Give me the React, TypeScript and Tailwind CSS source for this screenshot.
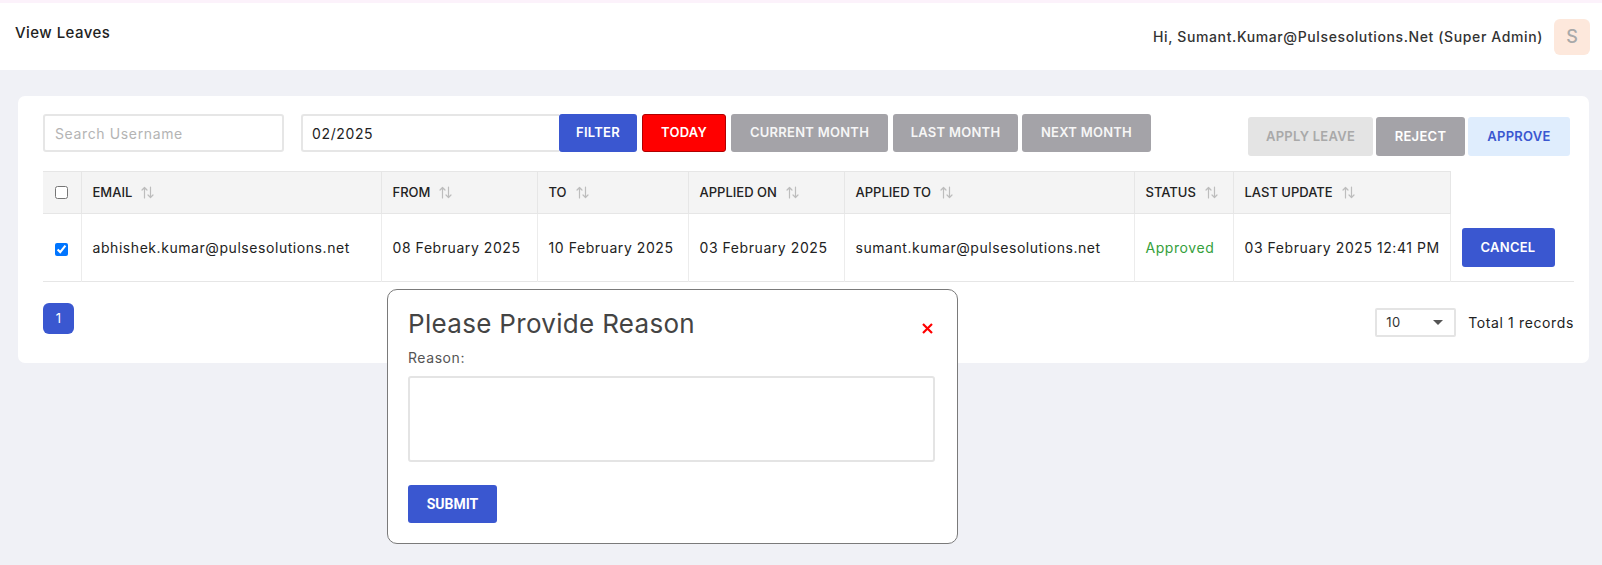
import React from "react";

const SortIcon = () => (
  <svg width="13" height="13" viewBox="0 0 13 13" fill="none" stroke="#bdbdbd" strokeWidth="1.2" strokeLinecap="round" strokeLinejoin="round" className="ml-[9px] shrink-0">
    <path d="M3.5 12V1.5M1 4L3.5 1.5L6 4" />
    <path d="M9.5 1V11.5M7 9L9.5 11.5L12 9" />
  </svg>
);

const cols = [
  { label: "EMAIL", w: "w-[300px]" },
  { label: "FROM", w: "w-[156px]" },
  { label: "TO", w: "w-[151px]" },
  { label: "APPLIED ON", w: "w-[156px]" },
  { label: "APPLIED TO", w: "w-[290px]" },
  { label: "STATUS", w: "w-[99px]" },
  { label: "LAST UPDATE", w: "w-[217px]" },
];

const cell = "whitespace-nowrap border-x border-[#ececec] px-[11px] tracking-[0.04em]";

export default function App() {
  return (
    <div
      className="relative min-h-[565px] bg-[#f0f1f6] text-[#222]"
      style={{ fontFamily: 'Inter, "Open Sans", sans-serif' }}
    >
      <div className="h-[3px] bg-[#fcf2fb]" />
      <header className="flex h-[67px] items-center justify-between bg-white pl-[15px] pr-[12px]">
        <div className="-mt-[7px] text-[15px] font-medium tracking-[0.03em] text-[#222]">View Leaves</div>
        <div className="flex items-center gap-[11px]">
          <span className="text-[14px] font-medium tracking-[0.044em] text-[#333]">Hi, Sumant.Kumar@Pulsesolutions.Net (Super Admin)</span>
          <div className="flex h-[36px] w-[36px] items-center justify-center rounded-[6px] bg-[#fde8dc] text-[18px] font-medium text-[#a9a9a9]">S</div>
        </div>
      </header>

      <div className="ml-[18px] mr-[13px] mt-[26px] rounded-[7px] bg-white pb-[26px] pl-[25px] pr-[15px] pt-[18px]">
        <div className="flex items-start">
          <input
            placeholder="Search Username"
            className="h-[38px] w-[241px] rounded-[3px] border-2 border-[#e6e6e6] px-[10px] text-[14px] tracking-[0.045em] text-[#222] outline-none placeholder:text-[#b4b4b4]"
          />
          <input
            defaultValue="02/2025"
            className="ml-[17px] h-[38px] w-[258px] rounded-l-[3px] border-2 border-r-0 border-[#e6e6e6] px-[9px] text-[14px] tracking-[0.045em] text-[#222] outline-none"
          />
          <button className="h-[38px] w-[78px] rounded-[3px] bg-[#3a57d0] text-[13px] font-semibold tracking-[0.02em] text-white">FILTER</button>
          <button className="ml-[5px] h-[38px] w-[84px] rounded-[3px] border border-[#b00000] bg-[#ff0000] text-[13px] font-semibold tracking-[0.02em] text-white">TODAY</button>
          <button className="ml-[5px] h-[38px] w-[157px] rounded-[3px] bg-[#a4a3a8] text-[13px] font-semibold tracking-[0.02em] text-[#f6f6f6]">CURRENT MONTH</button>
          <button className="ml-[5px] h-[38px] w-[125px] rounded-[3px] bg-[#a4a3a8] text-[13px] font-semibold tracking-[0.02em] text-[#f6f6f6]">LAST MONTH</button>
          <button className="ml-[4px] h-[38px] w-[129px] rounded-[3px] bg-[#a4a3a8] text-[13px] font-semibold tracking-[0.02em] text-[#f6f6f6]">NEXT MONTH</button>
          <div className="flex-1" />
          <div className="mr-[4px] mt-[3px] flex gap-[3px]">
            <button className="h-[39px] w-[125px] rounded-[3px] bg-[#e4e4e4] text-[13px] font-semibold tracking-[0.02em] text-[#a9a9a9]">APPLY LEAVE</button>
            <button className="h-[39px] w-[89px] rounded-[3px] bg-[#a4a3a8] text-[13px] font-semibold tracking-[0.02em] text-white">REJECT</button>
            <button className="h-[39px] w-[102px] rounded-[3px] bg-[#dfedfd] text-[13px] font-semibold tracking-[0.02em] text-[#3a57d0]">APPROVE</button>
          </div>
        </div>

        <table className="mt-[15px] w-full table-fixed border-collapse">
          <thead>
            <tr className="h-[42px]">
              <th className="w-[38px] border-y border-[#e6e6e6] bg-[#f4f4f4] p-0 text-center align-middle">
                <input type="checkbox" className="mt-[6px] h-[13px] w-[13px]" readOnly />
              </th>
              {cols.map((c) => (
                <th
                  key={c.label}
                  className={`${c.w} border border-[#e6e6e6] bg-[#f4f4f4] px-[11px] text-left align-middle text-[13px] font-medium text-[#222]`}
                >
                  <div className="flex items-center whitespace-nowrap">
                    <span>{c.label}</span>
                    <SortIcon />
                  </div>
                </th>
              ))}
              <th className="border-l border-[#e6e6e6] bg-white p-0" />
            </tr>
          </thead>
          <tbody>
            <tr className="h-[68px] border-b border-[#e6e6e6] text-[14px] text-[#222]">
              <td className="p-0 text-center align-middle">
                <input type="checkbox" defaultChecked className="h-[13px] w-[13px] align-middle" readOnly />
              </td>
              <td className={cell}>abhishek.kumar@pulsesolutions.net</td>
              <td className={cell}>08 February 2025</td>
              <td className={cell}>10 February 2025</td>
              <td className={cell}>03 February 2025</td>
              <td className={cell}>sumant.kumar@pulsesolutions.net</td>
              <td className={`${cell} text-[#35a03c]`}>Approved</td>
              <td className={cell}>03 February 2025 12:41 PM</td>
              <td className="px-[11px]">
                <button className="h-[39px] w-[93px] rounded-[3px] bg-[#3a57d0] text-[13px] font-semibold tracking-[0.02em] text-white">CANCEL</button>
              </td>
            </tr>
          </tbody>
        </table>

        <div className="mt-[21px] flex items-start justify-between">
          <div className="flex h-[31px] w-[31px] items-center justify-center rounded-[6px] bg-[#3a57d0] text-[13px] text-white">1</div>
          <div className="mt-[5px] flex items-center">
            <div className="flex h-[29px] w-[81px] items-center justify-between rounded-[2px] border-2 border-[#e4e4e4] pl-[9px] pr-[11px] text-[13px] tracking-[0.04em] text-[#333]">
              <span>10</span>
              <svg width="10" height="6" viewBox="0 0 10 6">
                <path d="M0 0H10L5 5Z" fill="#555" />
              </svg>
            </div>
            <span className="ml-[12px] text-[14px] tracking-[0.045em] text-[#222]">Total 1 records</span>
          </div>
        </div>
      </div>

      <div className="absolute left-[387px] top-[289px] h-[255px] w-[571px] rounded-[10px] border border-[#7a7a7a] bg-white pl-[20px] pr-[22px] pt-[18px]">
        <div className="flex items-center justify-between">
          <h3 className="text-[26px] font-normal leading-[32px] tracking-[0.012em] text-[#444]">Please Provide Reason</h3>
          <svg width="11" height="11" viewBox="0 0 11 11" className="mr-[2px] mt-[8px]">
            <path d="M1 1L10 10M10 1L1 10" stroke="#ff0000" strokeWidth="2.2" />
          </svg>
        </div>
        <div className="mt-[7px] text-[14px] tracking-[0.04em] text-[#555]">Reason:</div>
        <textarea className="mt-[8px] block h-[86px] w-[527px] resize-none rounded-[3px] border-2 border-[#e4e4e4] outline-none" />
        <button
          className="mt-[23px] h-[38px] w-[89px] rounded-[3px] bg-[#3a57d0] text-[14px] font-bold text-white"
          style={{ fontFamily: "Roboto, sans-serif" }}
        >
          SUBMIT
        </button>
      </div>
    </div>
  );
}
